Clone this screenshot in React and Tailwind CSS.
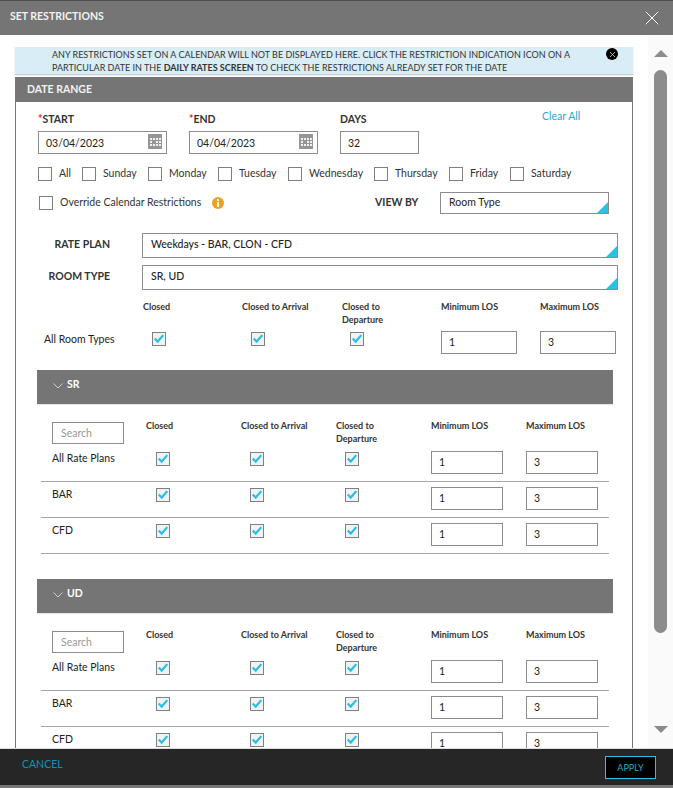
import { X } from "lucide-react";

const days = [
  { label: "All", w: "w-[44px]" },
  { label: "Sunday", w: "w-[66px]" },
  { label: "Monday", w: "w-[70px]" },
  { label: "Tuesday", w: "w-[70px]" },
  { label: "Wednesday", w: "w-[86px]" },
  { label: "Thursday", w: "w-[75px]" },
  { label: "Friday", w: "w-[61px]" },
  { label: "Saturday", w: "w-[70px]" },
];

function Box({ className = "" }) {
  return <span className={`block w-[14px] h-[14px] border border-[#808080] bg-white shrink-0 ${className}`}></span>;
}

function Check({ className = "" }) {
  return (
    <span className={`block w-[14px] h-[14px] border border-[#808080] bg-[#eef3f6] ${className}`}>
      <svg viewBox="0 0 14 14" className="w-[12px] h-[12px]">
        <path d="M2 6.5 L5.5 10 L12 2.5" fill="none" stroke="#2dbde6" strokeWidth="2.6" />
      </svg>
    </span>
  );
}

function TextInput({ value, className = "" }) {
  return (
    <input
      readOnly
      value={value}
      className={`block h-[23px] border border-[#8c8c8c] bg-white pl-[7px] text-[10.5px] text-[#222] outline-none ${className}`}
    />
  );
}

function Select({ value, className = "" }) {
  return (
    <div className={`relative flex items-center border border-[#8c8c8c] bg-white pl-[8px] text-[10.5px] text-[#222] ${className}`}>
      {value}
      <span className="absolute right-0 bottom-0 w-0 h-0 border-l-[11px] border-l-transparent border-b-[11px] border-b-[#2cc0e8]"></span>
    </div>
  );
}

function DateField({ label, value }) {
  return (
    <div className="w-[129px]">
      <div className="h-[20px] text-[10.5px] font-bold text-[#333] leading-[16px]">
        <span className="text-[#e8192c]">*</span>
        {label}
      </div>
      <div className="relative">
        <TextInput value={value} className="w-full h-[22px]" />
        <svg viewBox="0 0 14 15" className="absolute right-[5px] top-[3px] w-[14px] h-[15px]">
          <rect width="14" height="15" fill="#969696" />
          <g fill="#f1f1f1">
            <rect x="2" y="4" width="2" height="2" />
            <rect x="5" y="4" width="2" height="2" />
            <rect x="8" y="4" width="2" height="2" />
            <rect x="11" y="4" width="2" height="2" />
            <rect x="2" y="7" width="2" height="2" />
            <rect x="8" y="7" width="2" height="2" />
            <rect x="11" y="7" width="2" height="2" />
            <rect x="2" y="10" width="2" height="2" />
            <rect x="5" y="10" width="2" height="2" />
            <rect x="8" y="10" width="2" height="2" />
            <rect x="11" y="10" width="2" height="2" />
          </g>
        </svg>
      </div>
    </div>
  );
}

function HeadCell({ children, className = "" }) {
  return <div className={`text-[9px] leading-[13px] font-bold text-[#333] ${className}`}>{children}</div>;
}

function PlanRow({ name }) {
  return (
    <div className="grid grid-cols-[94px_95px_95px_95px_95px_1fr] items-start h-[36px] pt-[5px] pl-[11px] border-b border-[#a6a6a6]">
      <div className="text-[10.5px] leading-[14px] text-[#222]">{name}</div>
      <Check className="ml-[10px] mt-[1px]" />
      <Check className="ml-[9px] mt-[1px]" />
      <Check className="ml-[9px] mt-[1px]" />
      <TextInput value="1" className="w-[72px]" />
      <TextInput value="3" className="w-[72px]" />
    </div>
  );
}

function RoomSection({ name }) {
  return (
    <section className="ml-[21px] w-[576px] mb-[25px]">
      <div className="flex items-center h-[35px] bg-[#757575] border-b border-[#e4e4e4] pl-[16px] pb-[4px] text-[10.5px] font-bold text-white">
        <svg viewBox="0 0 10 6" className="w-[10px] h-[6px] mr-[4px] mt-[3px]">
          <path d="M0.5 0.5 L5 5 L9.5 0.5" fill="none" stroke="#e6e6e6" strokeWidth="0.8" />
        </svg>
        {name}
      </div>
      <div className="mx-[4px] w-[568px]">
        <div className="grid grid-cols-[94px_95px_95px_95px_95px_1fr] pl-[11px] pt-[17px] h-[41px]">
          <input
            readOnly
            placeholder="Search"
            className="w-[72px] h-[22px] border border-[#8c8c8c] pl-[8px] text-[10.5px] placeholder:text-[#999] outline-none"
          />
          <HeadCell className="-mt-[3px]">Closed</HeadCell>
          <HeadCell className="-mt-[3px]">Closed to Arrival</HeadCell>
          <HeadCell className="-mt-[3px]">
            Closed to
            <br />
            Departure
          </HeadCell>
          <HeadCell className="-mt-[3px]">Minimum LOS</HeadCell>
          <HeadCell className="-mt-[3px]">Maximum LOS</HeadCell>
        </div>
        <PlanRow name="All Rate Plans" />
        <PlanRow name="BAR" />
        <PlanRow name="CFD" />
      </div>
    </section>
  );
}

export default function App() {
  return (
    <div className="w-[673px] h-[788px] flex flex-col overflow-hidden bg-white font-['Lato','Liberation_Sans',sans-serif]">
      <header className="flex items-center justify-between h-[35px] shrink-0 bg-[#757575] border-t border-[#4d4d4d] pl-[10px] pr-[9px]">
        <h1 className="text-[10.5px] font-bold text-[#f2f2f2] -mt-[3px]">SET RESTRICTIONS</h1>
        <X size={24} strokeWidth={1} className="text-white" />
      </header>

      <main className="flex flex-1 min-h-0">
        <div className="w-[618px] ml-[15px] pt-[12px] flex flex-col min-h-0">
          <div className="relative h-[27px] shrink-0 bg-[#d9edf7] pl-[37px] text-[9px] leading-[13px] text-[#333] shadow-[0_1px_1px_#ccc]">
            <p className="pt-[1px]">
              ANY RESTRICTIONS SET ON A CALENDAR WILL NOT BE DISPLAYED HERE. CLICK THE RESTRICTION INDICATION ICON ON A
              <br />
              PARTICULAR DATE IN THE <b>DAILY RATES SCREEN</b> TO CHECK THE RESTRICTIONS ALREADY SET FOR THE DATE
            </p>
            <span className="absolute right-[15px] top-[1px] flex items-center justify-center w-[12px] h-[12px] rounded-full bg-black">
              <X size={9} strokeWidth={2} className="text-[#ddd]" />
            </span>
          </div>

          <div className="mt-[3px] flex-1 min-h-0 overflow-hidden border-x border-[#757575]">
            <div className="flex items-center h-[25px] -mx-px bg-[#757575] pl-[12px] text-[10.5px] font-bold text-[#f2f2f2]">
              DATE RANGE
            </div>

            <div className="flex gap-[22px] pl-[22px] pt-[9px]">
              <DateField label="START" value="03/04/2023" />
              <DateField label="END" value="04/04/2023" />
              <div className="w-[79px]">
                <div className="h-[20px] text-[10.5px] font-bold text-[#333] leading-[16px]">DAYS</div>
                <TextInput value="32" className="w-full h-[22px]" />
              </div>
              <a className="ml-[101px] text-[10.5px] leading-[14px] text-[#2aa9d2] -mt-[2px]">Clear All</a>
            </div>

            <div className="flex pl-[22px] mt-[12px]">
              {days.map((d) => (
                <label key={d.label} className={`flex items-center gap-[7px] text-[10.5px] text-[#333] ${d.w}`}>
                  <Box />
                  {d.label}
                </label>
              ))}
            </div>

            <div className="flex items-center h-[22px] pl-[23px] pr-[23px] mt-[10px]">
              <Box />
              <span className="ml-[7px] mt-[1px] text-[10.5px] text-[#333]">Override Calendar Restrictions</span>
              <svg viewBox="0 0 12 12" className="ml-[11px] w-[12px] h-[12px]">
                <circle cx="6" cy="6" r="6" fill="#e8a421" />
                <rect x="5" y="2" width="2" height="2" fill="#fff" />
                <rect x="5" y="5" width="2" height="5" fill="#fff" />
              </svg>
              <span className="ml-auto w-[65px] text-[10.5px] font-bold text-[#333]">VIEW BY</span>
              <Select value="Room Type" className="w-[169px] h-[22px] pt-[1px]" />
            </div>

            <div className="flex items-start mt-[19px] pr-[14px]">
              <div className="w-[126px] pr-[32px] text-right text-[10.5px] font-bold text-[#333] mt-[4px]">RATE PLAN</div>
              <Select value="Weekdays - BAR, CLON - CFD" className="flex-1 h-[25px] font-medium" />
            </div>
            <div className="flex items-start mt-[7px] pr-[14px]">
              <div className="w-[126px] pr-[32px] text-right text-[10.5px] font-bold text-[#333] mt-[4px]">ROOM TYPE</div>
              <Select value="SR, UD" className="flex-1 h-[25px] font-medium" />
            </div>

            <div className="grid grid-cols-[99px_99px_100px_99px_99px_1fr] pl-[28px] pt-[10px]">
              <div></div>
              <HeadCell>Closed</HeadCell>
              <HeadCell>Closed to Arrival</HeadCell>
              <HeadCell>
                Closed to
                <br />
                Departure
              </HeadCell>
              <HeadCell>Minimum LOS</HeadCell>
              <HeadCell>Maximum LOS</HeadCell>
            </div>
            <div className="grid grid-cols-[99px_99px_100px_99px_99px_1fr] items-start pl-[28px] mt-[5px] mb-[17px] h-[22px]">
              <div className="text-[10.5px] leading-[14px] text-[#222] mt-[1px] whitespace-nowrap">All Room Types</div>
              <Check className="ml-[9px] mt-[1px]" />
              <Check className="ml-[9px] mt-[1px]" />
              <Check className="ml-[8px] mt-[1px]" />
              <TextInput value="1" className="w-[76px] h-[22px]" />
              <TextInput value="3" className="w-[76px] h-[22px]" />
            </div>

            <RoomSection name="SR" />
            <RoomSection name="UD" />
          </div>
        </div>

        <aside className="ml-[15px] w-[25px] flex flex-col items-center bg-[#fafafa] pt-[15px]">
          <span className="w-0 h-0 border-x-[7px] border-x-transparent border-b-[7px] border-b-[#8c8c8c]"></span>
          <div className="mt-[13px] w-[13px] h-[563px] rounded-full bg-[#8c8c8c]"></div>
          <span className="mt-[93px] w-0 h-0 border-x-[7px] border-x-transparent border-t-[7px] border-t-[#8c8c8c]"></span>
        </aside>
      </main>

      <footer className="flex items-start justify-between h-[40px] shrink-0 bg-[#262626] border-t border-[#ddd] border-b-[3px] border-b-[#777] pl-[22px] pr-[17px]">
        <a className="mt-[8px] text-[10.5px] leading-[14px] text-[#0f93b5]">CANCEL</a>
        <button className="mt-[7px] w-[51px] h-[23px] border border-[#25c3ec] bg-black text-[9px] text-[#2aa9c7]">APPLY</button>
      </footer>
    </div>
  );
}
